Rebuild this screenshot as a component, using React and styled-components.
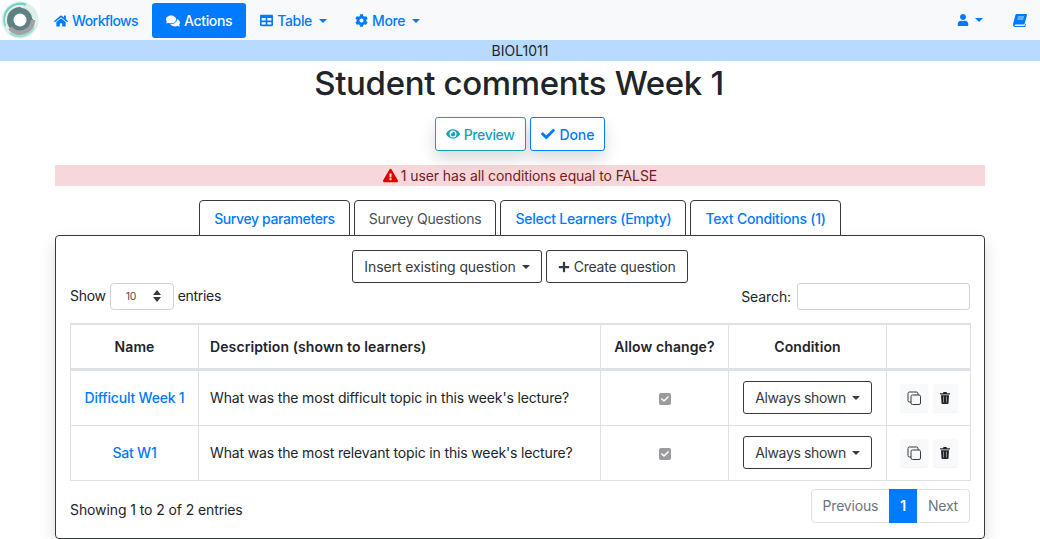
import React from 'react';
import styled, { createGlobalStyle } from 'styled-components';
import { FaHome, FaComments, FaTable, FaCog, FaUser, FaEye, FaCheck, FaPlus, FaExclamationTriangle } from 'react-icons/fa';

const GlobalStyle = createGlobalStyle`
  html, body {
    margin: 0;
    height: 539px;
    overflow: hidden;
    background: #fff;
    color: #212529;
    font-family: Inter, "Noto Sans", "Liberation Sans", sans-serif;
    font-size: 14px;
    letter-spacing: -0.1px;
  }
  * { box-sizing: border-box; }
`;

const Navbar = styled.nav`
  display: flex;
  align-items: center;
  height: 40px;
  background: #f8f9fa;
`;

const LogoBox = styled.div`
  width: 40px;
  height: 40px;
  background: #fff;
  flex: none;
`;

const NavItems = styled.div`
  display: flex;
  align-items: center;
  flex: 1;
`;

const NavItem = styled.a`
  display: flex;
  align-items: center;
  gap: 4px;
  height: 35px;
  margin-top: 1px;
  padding: 0 14px;
  border-radius: 3px;
  font-size: 14px;
  font-weight: 500;
  letter-spacing: ${p => p.$spacing ?? -0.35}px;
  color: ${p => (p.$active ? '#fff' : '#007bff')};
  background: ${p => (p.$active ? '#007bff' : 'transparent')};
`;

const NavIcon = styled.a`
  display: flex;
  align-items: center;
  gap: 6px;
  color: #007bff;
  margin-right: ${p => p.$right}px;
  svg { font-size: 12px; }
`;

const Caret = styled.span`
  display: inline-block;
  margin-left: ${p => p.$gap ?? 3}px;
  border-top: 4px solid currentColor;
  border-left: 4px solid transparent;
  border-right: 4px solid transparent;
`;

const Banner = styled.div`
  height: 21px;
  line-height: 22px;
  background: #b8daff;
  text-align: center;
  font-size: 14px;
  letter-spacing: 0;
  color: #212529;
`;

const Title = styled.h1`
  margin: 0;
  height: 56px;
  padding-right: 2px;
  line-height: 44px;
  text-align: center;
  font-size: 33px;
  font-weight: 500;
  letter-spacing: -0.35px;
`;

const ActionRow = styled.div`
  display: flex;
  justify-content: center;
  gap: 4px;
`;

const ShadowButton = styled.button`
  display: flex;
  align-items: center;
  gap: ${p => p.$gap}px;
  height: 34px;
  padding: 0 10px;
  font: 500 14px Inter, sans-serif;
  letter-spacing: ${p => p.$spacing}px;
  background: #fff;
  color: ${p => p.$color};
  border: 1px solid ${p => p.$color};
  border-radius: 3px;
  box-shadow: 0 8px 16px rgba(0, 0, 0, 0.15);
`;

const Alert = styled.div`
  display: flex;
  align-items: center;
  justify-content: center;
  gap: 3px;
  height: 21px;
  margin: 14px 55px 0;
  background: #f8d7da;
  color: #721c24;
  font-size: 14px;
  svg { color: #e00000; font-size: 15px; }
`;

const Tabs = styled.div`
  display: flex;
  justify-content: center;
  gap: 4px;
  margin-top: 14px;
  position: relative;
  z-index: 1;
  margin-bottom: -1px;
`;

const Tab = styled.div`
  display: flex;
  align-items: center;
  height: 36px;
  padding: 0 14px;
  font-size: 14px;
  letter-spacing: ${p => p.$spacing}px;
  font-weight: ${p => (p.$active ? 400 : 500)};
  color: ${p => (p.$active ? '#495057' : '#007bff')};
  background: #fff;
  border: 1px solid #343a40;
  border-radius: 4px 4px 0 0;
`;

const Card = styled.section`
  margin: 0 55px;
  height: 304px;
  padding: 14px 14px 0;
  border: 1px solid #343a40;
  border-radius: 4px;
  box-shadow: 0 8px 16px rgba(0, 0, 0, 0.15);
`;

const CenterRow = styled.div`
  display: flex;
  justify-content: center;
  gap: 4px;
`;

const OutlineButton = styled.button`
  display: inline-flex;
  align-items: center;
  justify-content: center;
  gap: 4px;
  height: 33px;
  padding: 0 11px;
  background: #fff;
  color: #343a40;
  border: 1px solid #343a40;
  border-radius: 3px;
  font: 400 14px Inter, sans-serif;
  letter-spacing: ${p => p.$spacing ?? -0.1}px;
  white-space: nowrap;
  svg { font-size: 12px; }
`;

const Controls = styled.div`
  display: flex;
  justify-content: space-between;
  align-items: center;
  margin-bottom: 13px;
  height: 28px;
  margin-top: -1px;
`;

const ShowLabel = styled.div`
  display: flex;
  align-items: center;
  gap: 4px;
  margin-top: -2px;
  letter-spacing: -0.3px;
`;

const PageSize = styled.div`
  display: flex;
  align-items: center;
  justify-content: space-between;
  width: 64px;
  height: 27px;
  padding: 0 12px 0 15px;
  margin-top: 2px;
  border: 1px solid #ced4da;
  border-radius: 4px;
  font-size: 10.5px;
  color: #495057;
`;

const Spinner = styled.svg`
  width: 8px;
  height: 12px;
`;

const SearchBox = styled.div`
  display: flex;
  align-items: center;
  gap: 6px;
`;

const SearchInput = styled.div`
  width: 173px;
  height: 27px;
  border: 1px solid #ced4da;
  border-radius: 3px;
`;

const Table = styled.table`
  width: 900px;
  border-collapse: collapse;
  table-layout: fixed;
  font-size: 14px;
`;

const Th = styled.th`
  height: 45px;
  padding: 0 11px;
  font-weight: 600;
  letter-spacing: 0.1px;
  text-align: ${p => p.$align || 'center'};
  border: 1px solid #dee2e6;
  border-bottom-width: 3px;
  border-top-width: 2px;
`;

const Td = styled.td`
  height: ${p => p.$h || 55}px;
  padding: 0 ${p => p.$pad ?? 11}px;
  letter-spacing: -0.15px;
  text-align: ${p => p.$align || 'center'};
  border: 1px solid #dee2e6;
`;

const NameLink = styled.a`
  color: #007bff;
  font-weight: 500;
  letter-spacing: -0.2px;
`;

const Check = styled.span`
  display: inline-flex;
  align-items: center;
  justify-content: center;
  width: 12px;
  height: 12px;
  border-radius: 2px;
  background: #9b9b9f;
  color: #fff;
  font-size: 8px;
  vertical-align: middle;
`;

const RowActions = styled.div`
  display: flex;
  justify-content: center;
  gap: 5px;
`;

const IconButton = styled.button`
  display: flex;
  align-items: center;
  justify-content: center;
  width: ${p => p.$w}px;
  height: 28px;
  padding: 0;
  background: #f8f9fa;
  border: 0;
  border-radius: 3px;
  color: #212529;
  box-shadow: 0 1px 1px rgba(0, 0, 0, 0.05);
`;

const Footer = styled.div`
  display: flex;
  justify-content: space-between;
  margin-top: 8px;
`;

const Summary = styled.span`
  padding-top: 12px;
  letter-spacing: -0.1px;
`;

const Pager = styled.div`
  display: flex;
  height: 34px;
  border: 1px solid #dee2e6;
  border-radius: 4px;
`;

const PageLink = styled.span`
  display: flex;
  align-items: center;
  padding: 0 11px;
  margin: ${p => (p.$active ? '-1px 0' : 0)};
  letter-spacing: -0.2px;
  color: ${p => (p.$active ? '#fff' : '#6c757d')};
  background: ${p => (p.$active ? '#007bff' : 'transparent')};
  font-weight: ${p => (p.$active ? 600 : 400)};
`;

const Logo = () => (
  <svg width="40" height="40" viewBox="0 0 40 40">
    <circle cx="20" cy="20" r="18.5" fill="#d9efea" />
    <path d="M6 26A15.5 15.5 0 0 1 26 5" fill="none" stroke="#6fd3bd" strokeWidth="2.5" />
    <path d="M34 27A16 16 0 0 1 10 33" fill="none" stroke="#8fe0cf" strokeWidth="2" />
    <circle cx="20" cy="20" r="15" fill="#e6eeec" />
    <circle cx="20" cy="20" r="13" fill="#5f8183" />
    <path d="M10 28a13 13 0 0 0 23-8" fill="none" stroke="#a0a2a6" strokeWidth="4.5" />
    <path d="M21 7a13 13 0 0 1 12 12" fill="none" stroke="#d8ebe7" strokeWidth="1.5" />
    <circle cx="20" cy="20" r="6.5" fill="#fff" />
  </svg>
);

const BookIcon = () => (
  <svg width="14" height="13" viewBox="0 0 14 13" fill="currentColor">
    <path d="M3.6 0H13a1 1 0 0 1 .9 1.2l-2.2 8.3a1.2 1.2 0 0 1-1.1.9H2.4c-.8 0-.9.6-.7 1 .1.3.4.5.9.5h8.9l.6-2.2h.9l-.9 3.3H2.2C1 13 .2 12.2 0 11c-.1-.4 0-.9.1-1.2L2.4 1A1.4 1.4 0 0 1 3.6 0z" />
    <path d="M5 3h6M4.4 5h6" stroke="#f8f9fa" strokeWidth="0.8" />
  </svg>
);

const CopyIcon = () => (
  <svg width="14" height="14" viewBox="0 0 14 14" fill="none" stroke="#343a40" strokeWidth="1">
    <rect x="4" y="4" width="9.5" height="9.5" rx="1.5" />
    <path d="M4 11H2.5A1.5 1.5 0 0 1 1 9.500V2.500A1.5 1.5 0 0 1 2.500 1h7A1.500 1.500 0 0 1 11 2.500V4" />
  </svg>
);

const TrashIcon = () => (
  <svg width="10" height="12" viewBox="0 0 10 12" fill="#212529">
    <path d="M3.500 0h3l.5 1.200H10v1.200H0V1.200h3zM1 3.200h8l-.5 8a.8.8 0 0 1-.8.8H2.300a.8.8 0 0 1-.8-.8z" />
    <path d="M3.500 4.500v6M6.500 4.500v6" stroke="#8a8d90" strokeWidth="1" />
  </svg>
);

const tabs = [
  { label: 'Survey parameters', spacing: -0.39 },
  { label: 'Survey Questions', spacing: -0.24, active: true },
  { label: 'Select Learners (Empty)', spacing: -0.25 },
  { label: 'Text Conditions (1)', spacing: -0.22 },
];

const rows = [
  { name: 'Difficult Week 1', text: "What was the most difficult topic in this week's lecture?", h: 56 },
  { name: 'Sat W1', text: "What was the most relevant topic in this week's lecture?", h: 55 },
];

const App = () => (
  <>
    <GlobalStyle />
    <Navbar>
      <LogoBox><Logo /></LogoBox>
      <NavItems>
        <NavItem $spacing={-0.6}><FaHome size={14} />Workflows</NavItem>
        <NavItem $active><FaComments size={14} />Actions</NavItem>
        <NavItem><FaTable size={13} />Table<Caret /></NavItem>
        <NavItem><FaCog size={13} />More<Caret /></NavItem>
      </NavItems>
      <NavIcon $right={30}><FaUser /><Caret $gap={0} /></NavIcon>
      <NavIcon $right={13}><BookIcon /></NavIcon>
    </Navbar>
    <Banner>BIOL1011</Banner>
    <Title>Student comments Week 1</Title>
    <ActionRow>
      <ShadowButton $color="#17a2b8" $gap={4} $spacing={-0.35}><FaEye />Preview</ShadowButton>
      <ShadowButton $color="#007bff" $gap={5} $spacing={-0.1}><FaCheck />Done</ShadowButton>
    </ActionRow>
    <Alert><FaExclamationTriangle />1 user has all conditions equal to FALSE</Alert>
    <Tabs>
      {tabs.map(tab => (
        <Tab key={tab.label} $active={tab.active} $spacing={tab.spacing}>{tab.label}</Tab>
      ))}
    </Tabs>
    <Card>
      <CenterRow>
        <OutlineButton>Insert existing question<Caret $gap={2} /></OutlineButton>
        <OutlineButton $spacing={-0.2}><FaPlus />Create question</OutlineButton>
      </CenterRow>
      <Controls>
        <ShowLabel>
          Show
          <PageSize>
            10
            <Spinner viewBox="0 0 8 12">
              <path d="M4 0l4 5H0zM4 12L0 7h8z" fill="#343a40" />
            </Spinner>
          </PageSize>
          entries
        </ShowLabel>
        <SearchBox>Search:<SearchInput /></SearchBox>
      </Controls>
      <Table>
        <colgroup>
          <col width="128" />
          <col width="402" />
          <col width="128" />
          <col width="158" />
          <col width="84" />
        </colgroup>
        <thead>
          <tr>
            <Th>Name</Th>
            <Th $align="left">Description (shown to learners)</Th>
            <Th>Allow change?</Th>
            <Th>Condition</Th>
            <Th />
          </tr>
        </thead>
        <tbody>
          {rows.map(row => (
            <tr key={row.name}>
              <Td $h={row.h}><NameLink>{row.name}</NameLink></Td>
              <Td $h={row.h} $align="left">{row.text}</Td>
              <Td $h={row.h}><Check><FaCheck /></Check></Td>
              <Td $h={row.h} $pad={0}><OutlineButton $spacing={-0.35}>Always shown<Caret $gap={2} /></OutlineButton></Td>
              <Td $h={row.h} $pad={0}>
                <RowActions>
                  <IconButton $w={28}><CopyIcon /></IconButton>
                  <IconButton $w={25}><TrashIcon /></IconButton>
                </RowActions>
              </Td>
            </tr>
          ))}
        </tbody>
      </Table>
      <Footer>
        <Summary>Showing 1 to 2 of 2 entries</Summary>
        <Pager>
          <PageLink>Previous</PageLink>
          <PageLink $active>1</PageLink>
          <PageLink>Next</PageLink>
        </Pager>
      </Footer>
    </Card>
  </>
);

export default App;
